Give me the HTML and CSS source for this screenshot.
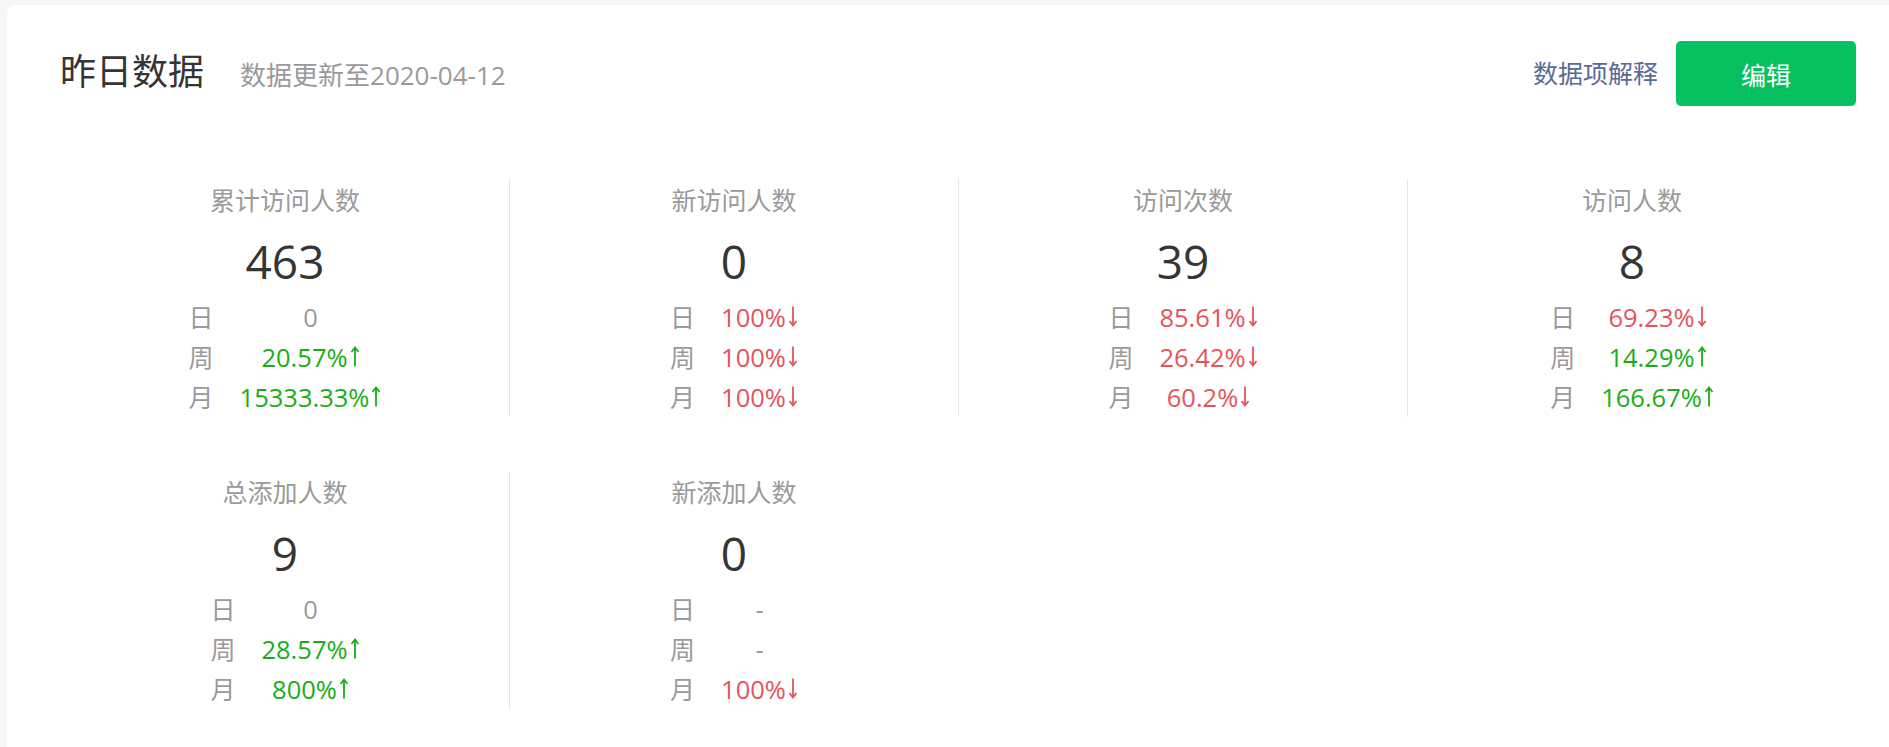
FILE: index.html
```html
<!DOCTYPE html>
<html lang="zh-CN">
<head>
<meta charset="utf-8">
<title>昨日数据</title>
<link rel="stylesheet" href="styles.css">
</head>
<body>
<div class="card">
  <div class="header">
    <div class="header-left">
      <h1 class="title">昨日数据</h1>
      <span class="subtitle">数据更新至2020-04-12</span>
    </div>
    <div class="header-right">
      <a class="link" href="#">数据项解释</a>
      <button class="btn" type="button">编辑</button>
    </div>
  </div>
  <div class="grid">
    <div class="stat">
      <div class="stat-title">累计访问人数</div>
      <div class="stat-num">463</div>
      <div class="stat-rows">
        <span class="lbl">日</span><span class="val">0</span>
        <span class="lbl">周</span><span class="val up">20.57%<svg class="arrow" viewBox="0 0 10 21" aria-label="↑"><path d="M5 20.5V1.5M1.5 6L5 1.5L8.5 6"/></svg></span>
        <span class="lbl">月</span><span class="val up">15333.33%<svg class="arrow" viewBox="0 0 10 21" aria-label="↑"><path d="M5 20.5V1.5M1.5 6L5 1.5L8.5 6"/></svg></span>
      </div>
    </div>
    <div class="stat">
      <div class="stat-title">新访问人数</div>
      <div class="stat-num">0</div>
      <div class="stat-rows">
        <span class="lbl">日</span><span class="val down">100%<svg class="arrow" viewBox="0 0 10 21" aria-label="↓"><path d="M5 0.5V19.5M1.5 15L5 19.5L8.5 15"/></svg></span>
        <span class="lbl">周</span><span class="val down">100%<svg class="arrow" viewBox="0 0 10 21" aria-label="↓"><path d="M5 0.5V19.5M1.5 15L5 19.5L8.5 15"/></svg></span>
        <span class="lbl">月</span><span class="val down">100%<svg class="arrow" viewBox="0 0 10 21" aria-label="↓"><path d="M5 0.5V19.5M1.5 15L5 19.5L8.5 15"/></svg></span>
      </div>
    </div>
    <div class="stat">
      <div class="stat-title">访问次数</div>
      <div class="stat-num">39</div>
      <div class="stat-rows">
        <span class="lbl">日</span><span class="val down">85.61%<svg class="arrow" viewBox="0 0 10 21" aria-label="↓"><path d="M5 0.5V19.5M1.5 15L5 19.5L8.5 15"/></svg></span>
        <span class="lbl">周</span><span class="val down">26.42%<svg class="arrow" viewBox="0 0 10 21" aria-label="↓"><path d="M5 0.5V19.5M1.5 15L5 19.5L8.5 15"/></svg></span>
        <span class="lbl">月</span><span class="val down">60.2%<svg class="arrow" viewBox="0 0 10 21" aria-label="↓"><path d="M5 0.5V19.5M1.5 15L5 19.5L8.5 15"/></svg></span>
      </div>
    </div>
    <div class="stat">
      <div class="stat-title">访问人数</div>
      <div class="stat-num">8</div>
      <div class="stat-rows">
        <span class="lbl">日</span><span class="val down">69.23%<svg class="arrow" viewBox="0 0 10 21" aria-label="↓"><path d="M5 0.5V19.5M1.5 15L5 19.5L8.5 15"/></svg></span>
        <span class="lbl">周</span><span class="val up">14.29%<svg class="arrow" viewBox="0 0 10 21" aria-label="↑"><path d="M5 20.5V1.5M1.5 6L5 1.5L8.5 6"/></svg></span>
        <span class="lbl">月</span><span class="val up">166.67%<svg class="arrow" viewBox="0 0 10 21" aria-label="↑"><path d="M5 20.5V1.5M1.5 6L5 1.5L8.5 6"/></svg></span>
      </div>
    </div>
    <div class="stat">
      <div class="stat-title">总添加人数</div>
      <div class="stat-num">9</div>
      <div class="stat-rows">
        <span class="lbl">日</span><span class="val">0</span>
        <span class="lbl">周</span><span class="val up">28.57%<svg class="arrow" viewBox="0 0 10 21" aria-label="↑"><path d="M5 20.5V1.5M1.5 6L5 1.5L8.5 6"/></svg></span>
        <span class="lbl">月</span><span class="val up">800%<svg class="arrow" viewBox="0 0 10 21" aria-label="↑"><path d="M5 20.5V1.5M1.5 6L5 1.5L8.5 6"/></svg></span>
      </div>
    </div>
    <div class="stat">
      <div class="stat-title">新添加人数</div>
      <div class="stat-num">0</div>
      <div class="stat-rows">
        <span class="lbl">日</span><span class="val">-</span>
        <span class="lbl">周</span><span class="val">-</span>
        <span class="lbl">月</span><span class="val down">100%<svg class="arrow" viewBox="0 0 10 21" aria-label="↓"><path d="M5 0.5V19.5M1.5 15L5 19.5L8.5 15"/></svg></span>
      </div>
    </div>
  </div>
</div>
</body>
</html>
```

FILE: styles.css
```css
html, body {
  margin: 0;
  padding: 0;
}
body {
  background: #f5f6f8;
  font-family: "Open Sans", "Noto Sans CJK SC", sans-serif;
  color: #353535;
  height: 747px;
  overflow: hidden;
}
.card {
  margin: 5px 0 0 7px;
  background: #fff;
  border-top-left-radius: 8px;
  padding: 36px 33px 60px 53px;
  min-height: 700px;
  box-sizing: border-box;
}
.header {
  display: flex;
  justify-content: space-between;
  align-items: center;
}
.header-left {
  display: flex;
  align-items: baseline;
  gap: 36px;
  padding-bottom: 3px;
}
.title {
  margin: 0;
  font-size: 36px;
  font-weight: normal;
  color: #353535;
  line-height: 48px;
}
.subtitle {
  font-size: 26px;
  color: #9a9a9a;
}
.header-right {
  display: flex;
  align-items: center;
  gap: 18px;
}
.link {
  font-size: 25px;
  color: #576b95;
  text-decoration: none;
  padding-bottom: 4px;
}
.btn {
  width: 180px;
  height: 65px;
  border: 0;
  border-radius: 5px;
  background: #07c160;
  color: #fff;
  font-family: inherit;
  font-size: 25px;
  padding: 0;
  cursor: pointer;
}
.grid {
  margin-top: 73px;
  display: grid;
  grid-template-columns: repeat(4, 1fr);
  row-gap: 54px;
}
.stat {
  display: flex;
  flex-direction: column;
  align-items: center;
  border-left: 1px solid #e4e4ea;
  height: 238px;
}
.stat:nth-child(4n+1) {
  border-left-color: transparent;
}
.stat-title {
  font-size: 25px;
  line-height: 43px;
  color: #9a9a9a;
}
.stat-num {
  font-size: 46px;
  line-height: 62px;
  margin-top: 8px;
  color: #353535;
}
.stat-rows {
  margin-top: 5px;
  display: grid;
  grid-template-columns: auto auto;
  column-gap: 26px;
  font-size: 25.5px;
  line-height: 40px;
}
.lbl {
  color: #9a9a9a;
  font-size: 25px;
}
.val {
  justify-self: center;
  color: #9a9a9a;
  white-space: nowrap;
}
.val.up {
  color: #1aad19;
}
.val.down {
  color: #e4545c;
}
.arrow {
  width: 10px;
  height: 21px;
  margin-left: 2px;
  vertical-align: baseline;
  fill: none;
  stroke: currentColor;
  stroke-width: 1.8;
}
```
